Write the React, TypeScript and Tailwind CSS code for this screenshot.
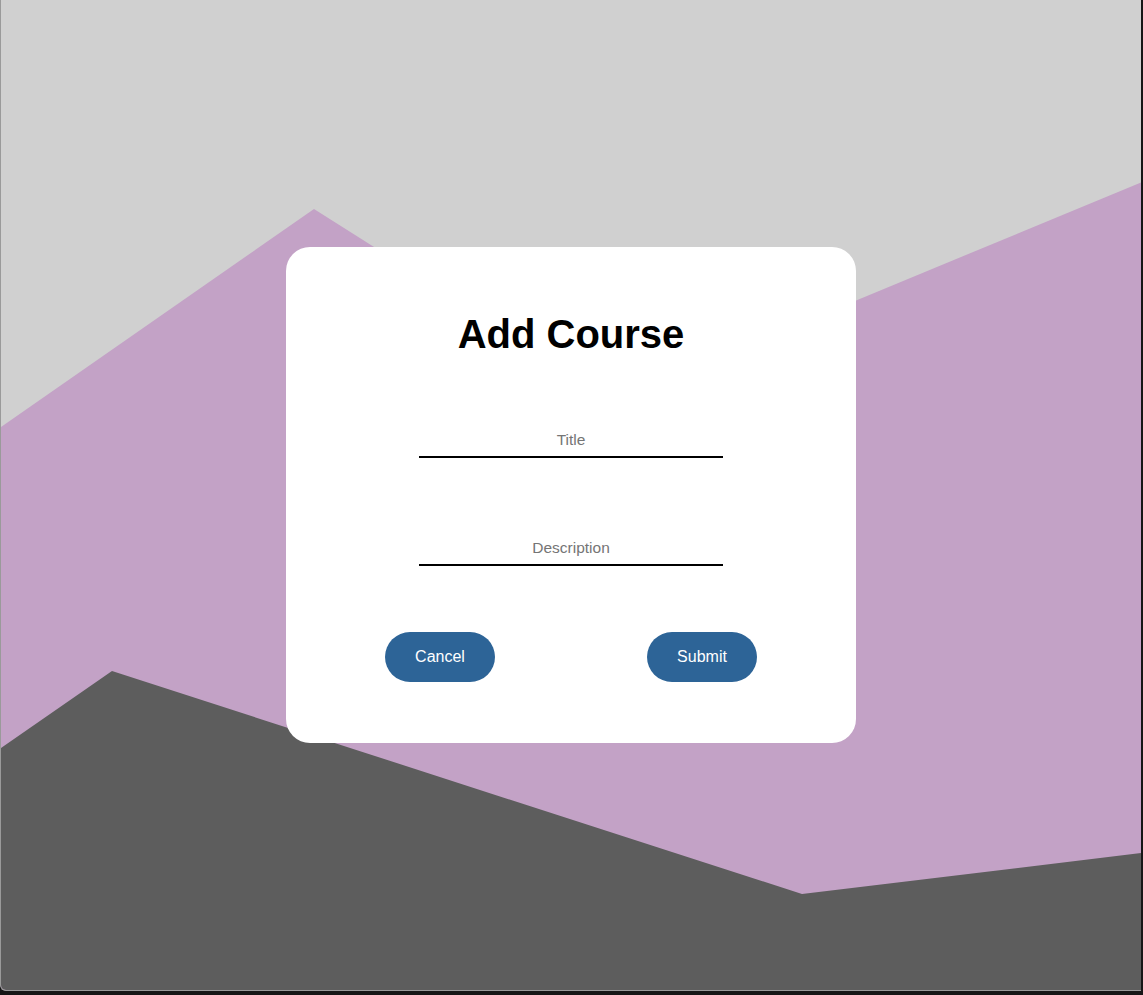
import React from "react";

export default function App() {
  return (
    <div className="w-[1143px] h-[995px] bg-[#161616] overflow-hidden" style={{ fontFamily: '"Liberation Sans", Arial, sans-serif' }}>
      <div className="relative w-[1141px] h-[991px] overflow-hidden rounded-bl-[6px] border-l border-b border-[#9a9a9a] bg-[#d0d0d0]">
        <svg className="absolute inset-0" width="1141" height="991" viewBox="0 0 1141 991">
          <polygon points="0,427 313,209 615,400 1141,182 1141,991 0,991" fill="#c3a2c6" />
          <polygon points="0,748 111,671 801,894 1141,853 1141,991 0,991" fill="#5d5d5d" />
        </svg>
        <div className="relative flex h-full items-center justify-center">
          <div className="flex w-[570px] h-[496px] flex-col items-center rounded-[24px] bg-white pt-[64px]">
            <h1 className="h-[46px] text-[40px] leading-[46px] font-bold text-black">Add Course</h1>
            <input
              placeholder="Title"
              className="mt-[71px] h-[30px] w-[304px] border-b-2 border-black pb-[4px] text-center text-[15.5px] text-black outline-none placeholder:text-[#757575]"
            />
            <input
              placeholder="Description"
              className="mt-[78px] h-[30px] w-[304px] border-b-2 border-black pb-[4px] text-center text-[15.5px] text-black outline-none placeholder:text-[#757575]"
            />
            <div className="mt-[66px] flex w-[372px] justify-between">
              <button className="h-[50px] w-[110px] rounded-full bg-[#2d6497] text-[16px] text-white">Cancel</button>
              <button className="h-[50px] w-[110px] rounded-full bg-[#2d6497] text-[16px] text-white">Submit</button>
            </div>
          </div>
        </div>
      </div>
    </div>
  );
}
